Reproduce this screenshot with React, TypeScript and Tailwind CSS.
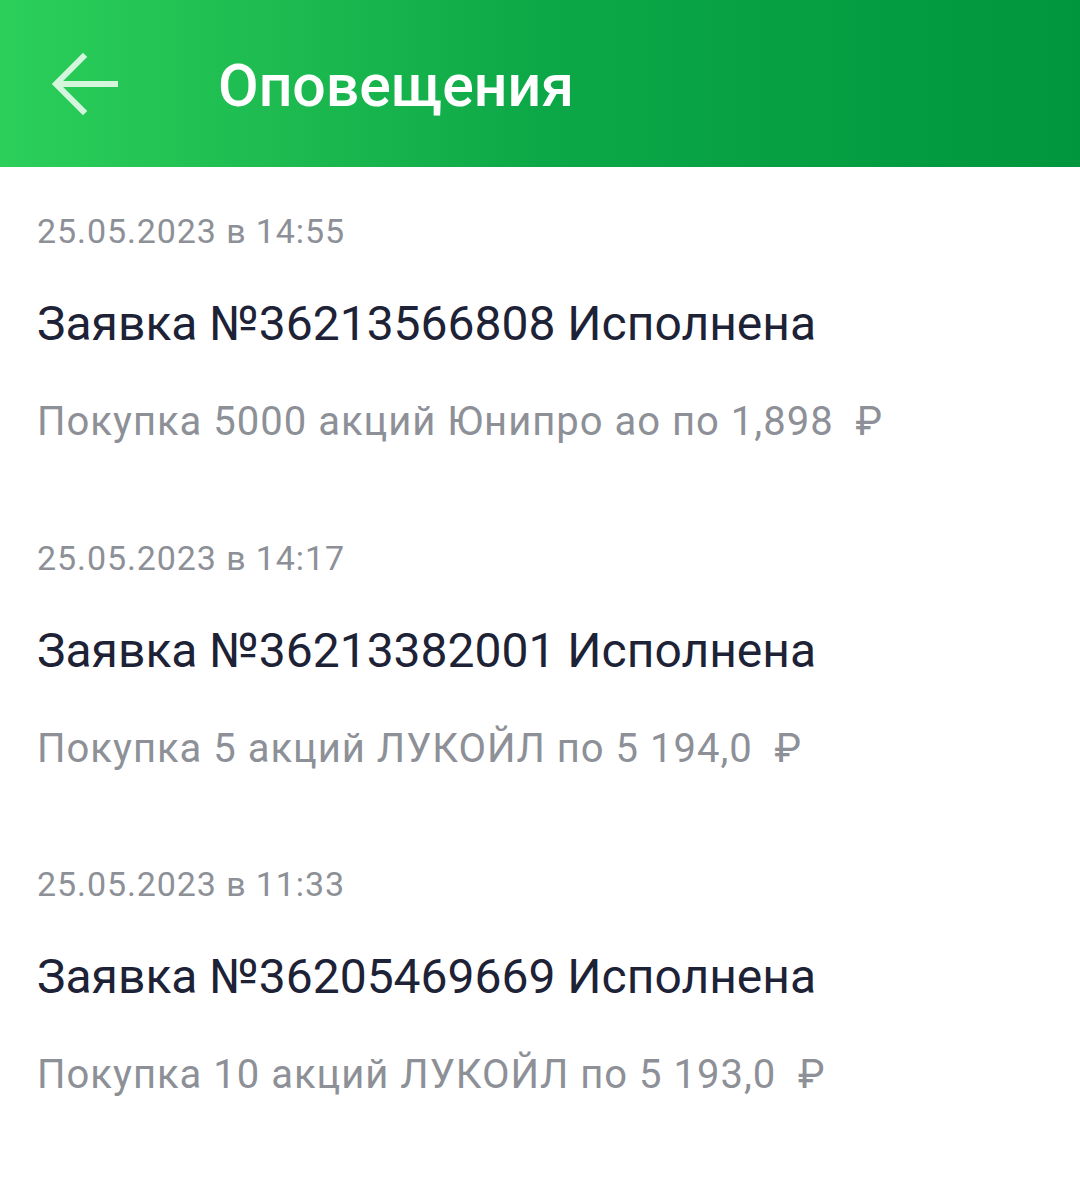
import React from 'react';

const ITEMS = [
  { date: '25.05.2023 в 14:55', title: 'Заявка №36213566808 Исполнена', text: 'Покупка 5000 акций Юнипро ао по 1,898' },
  { date: '25.05.2023 в 14:17', title: 'Заявка №36213382001 Исполнена', text: 'Покупка 5 акций ЛУКОЙЛ по 5 194,0' },
  { date: '25.05.2023 в 11:33', title: 'Заявка №36205469669 Исполнена', text: 'Покупка 10 акций ЛУКОЙЛ по 5 193,0' },
];

const App: React.FC = () => {
  return (
    <div className="min-h-[1179px] w-[1080px] bg-white font-['Roboto',sans-serif]">
      {/* Header */}
      <header className="flex h-[167px] items-center bg-gradient-to-r from-[#2bcf5a] via-[#0ca847] to-[#00963d]">
        <div className="flex w-[218px] items-center pl-[51px]">
          <svg width="68" height="66" viewBox="0 0 68 66" fill="none" stroke="#d3f6dc" strokeWidth="6" strokeLinecap="square">
            <path d="M64 33H8" />
            <path d="M32 6L5 33l27 27" />
          </svg>
        </div>
        <h1 className="mt-[4px] text-[59px] font-medium leading-none text-white">Оповещения</h1>
      </header>

      {/* List */}
      <div className="px-[37px] pt-[47px]">
        {ITEMS.map((item, i) => (
          <div key={i} className="flex h-[326.5px] flex-col">
            <div className="text-[34px] leading-none tracking-[0.9px] text-[#8d9097]">{item.date}</div>
            <div className="mt-[52px] text-[48px] leading-none text-[#1d2236]">{item.title}</div>
            <div className="mt-[54px] whitespace-pre text-[40px] leading-none tracking-[1px] text-[#8d9097]">
              {item.text}{'  '}₽
            </div>
          </div>
        ))}
      </div>
    </div>
  );
};

export default App;
